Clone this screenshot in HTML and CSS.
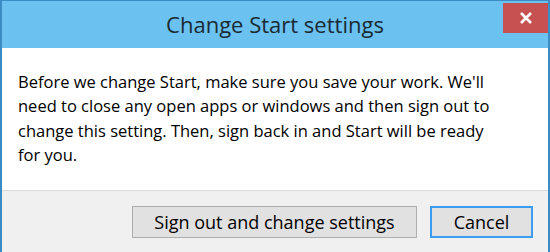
FILE: index.html
```html
<!DOCTYPE html>
<html>
<head>
	<meta charset="UTF-8">
	<title>Change Start settings</title>
	<link rel="stylesheet" href="styles.css">
</head>
<body>
<div id="dialog">
	<div id="titlebar">
		<span class="title">Change Start settings</span>
		<div class="close">
			<svg width="14" height="14" viewBox="0 0 14 14"><path d="M2 2L12 12M12 2L2 12" stroke="#fff" stroke-width="2.6"/></svg>
		</div>
	</div>
	<div id="content">
		<p>Before we change Start, make sure you save your work. We'll<br>
		need to close any open apps or windows and then sign out to<br>
		change this setting. Then, sign back in and Start will be ready<br>
		for you.</p>
	</div>
	<div id="footer">
		<button class="btn btn-wide">Sign out and change settings</button>
		<button class="btn btn-default">Cancel</button>
	</div>
</div>
</body>
</html>
```

FILE: styles.css
```css
html,body,p{
	padding: 0;
	margin: 0;
}
body{
	width:550px;
	height:252px;
	overflow:hidden;
	font-family:"Open Sans","Noto Sans",sans-serif;
	color:#000;
}

#dialog{
	height:252px;
	display:flex;
	flex-direction:column;
	border-top:1px solid #3b8cc4;
	border-left:2px solid #3b8cc4;
	border-right:2px solid #3b8cc4;
	background:#fff;
	position:relative;
}
#titlebar{
	height:47px;
	background:#6bc1f0;
	display:flex;
	align-items:center;
	justify-content:center;
}
#titlebar .title{
	font-size:22px;
	color:#1a2a35;
	margin-top:-2px;
}
#titlebar .close{
	position:absolute;
	top:2px;
	right:0;
	width:45px;
	height:30px;
	background:#c75050;
	display:flex;
	align-items:center;
	justify-content:center;
}

#content{
	flex:1;
	padding:22px 10px 0 16px;
}
#content p{
	font-size:16.5px;
	line-height:24.3px;
	white-space:nowrap;
}

#footer{
	height:47px;
	background:#f0f0f0;
	border-top:1px solid #dcdcdc;
	padding:15px 15px 0 0;
	display:flex;
	justify-content:flex-end;
	align-items:flex-start;
	gap:13px;
}
.btn{
	height:32px;
	font:18px "Open Sans","Noto Sans",sans-serif;
	color:#000;
	background:#e1e1e1;
	border:1px solid #adadad;
	padding:0;
}
.btn-wide{
	width:285px;
}
.btn-default{
	width:103px;
	border:2px solid #3c9df0;
}
```
